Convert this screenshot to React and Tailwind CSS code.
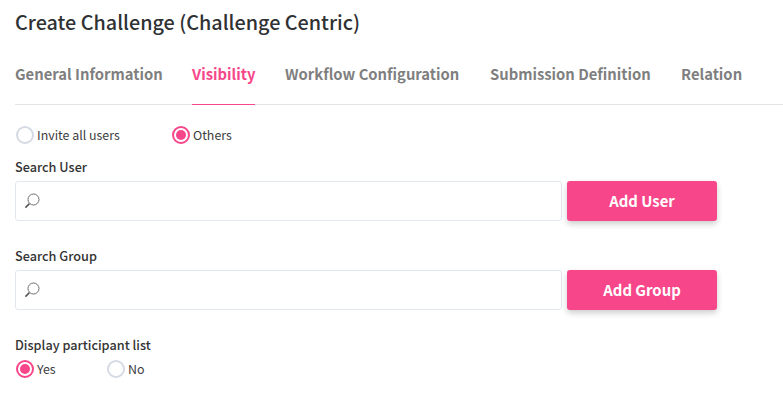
const SearchIcon = () => (
  <svg width="18" height="18" viewBox="0 0 18 18" fill="none" className="shrink-0">
    <circle cx="10.5" cy="7.5" r="5.5" stroke="#6f6f6f" strokeWidth="1" />
    <path d="M6.4 11.6 L2.4 15.6" stroke="#555" strokeWidth="1.5" />
  </svg>
);

const Radio = ({ checked, label, className = "" }) => (
  <div className={`flex items-center gap-[3px] ${className}`}>
    {checked ? (
      <span className="flex h-[18px] w-[18px] items-center justify-center rounded-full border-2 border-[#f7468a]">
        <span className="h-[10px] w-[10px] rounded-full bg-[#f7468a]" />
      </span>
    ) : (
      <span className="h-[18px] w-[18px] rounded-full border-2 border-[#d5dae3]" />
    )}
    <span className="text-[12.4px] leading-[18px] text-[#3c3c3c]">{label}</span>
  </div>
);

const SearchRow = ({ label, button }) => (
  <div>
    <div className="text-[12.7px] font-medium leading-[18px] text-[#333]">{label}</div>
    <div className="mt-[5px] flex gap-[5px]">
      <div className="flex h-[40px] w-[547px] items-center rounded-[3px] border border-[#e3e7ef] bg-white pl-[7px]">
        <SearchIcon />
      </div>
      <button className="h-[40px] w-[150px] rounded-[3px] bg-[#f7468a] pb-px text-[14.9px] font-bold leading-[20px] text-white shadow-[0_3px_6px_rgba(0,0,0,0.2)]">
        {button}
      </button>
    </div>
  </div>
);

const tabs = [
  { label: "General Information", w: "w-[147px]" },
  { label: "Visibility", w: "w-[63px]", active: true },
  { label: "Workflow Configuration", w: "w-[175px]" },
  { label: "Submission Definition", w: "w-[161px]" },
  { label: "Relation", w: "w-[61px]" },
];

export default function App() {
  return (
    <div
      className="h-[405px] w-[783px] overflow-hidden bg-white pl-[15px]"
      style={{ fontFamily: '"Noto Sans CJK JP", "Noto Sans", sans-serif' }}
    >
      <h1 className="pt-[10px] text-[19.8px] font-medium leading-[24px] text-[#2f3133]">
        Create Challenge (Challenge Centric)
      </h1>
      <div className="mt-[20px] flex h-[51px] gap-[30px] border-b border-[#e3e3e8] pt-[9px]">
        {tabs.map((t) => (
          <div
            key={t.label}
            className={`relative z-10 box-border h-[42px] whitespace-nowrap text-[14.8px] font-bold leading-[22px] ${t.w} ${
              t.active ? "border-b-[1px] border-b-[#f7468a] text-[#f7468a]" : "text-[#7f7f7f]"
            }`}
          >
            {t.label}
          </div>
        ))}
      </div>
      <div className="mt-[21px] flex pl-px">
        <Radio label="Invite all users" className="w-[156px]" />
        <Radio checked label="Others" />
      </div>
      <div className="mt-[14px]">
        <SearchRow label="Search User" button="Add User" />
      </div>
      <div className="mt-[26px]">
        <SearchRow label="Search Group" button="Add Group" />
      </div>
      <div className="mt-[26px] text-[12.7px] font-medium leading-[18px] text-[#333]">
        Display participant list
      </div>
      <div className="mt-[6px] flex pl-[1px]">
        <Radio checked label="Yes" className="w-[91px]" />
        <Radio label="No" />
      </div>
    </div>
  );
}
